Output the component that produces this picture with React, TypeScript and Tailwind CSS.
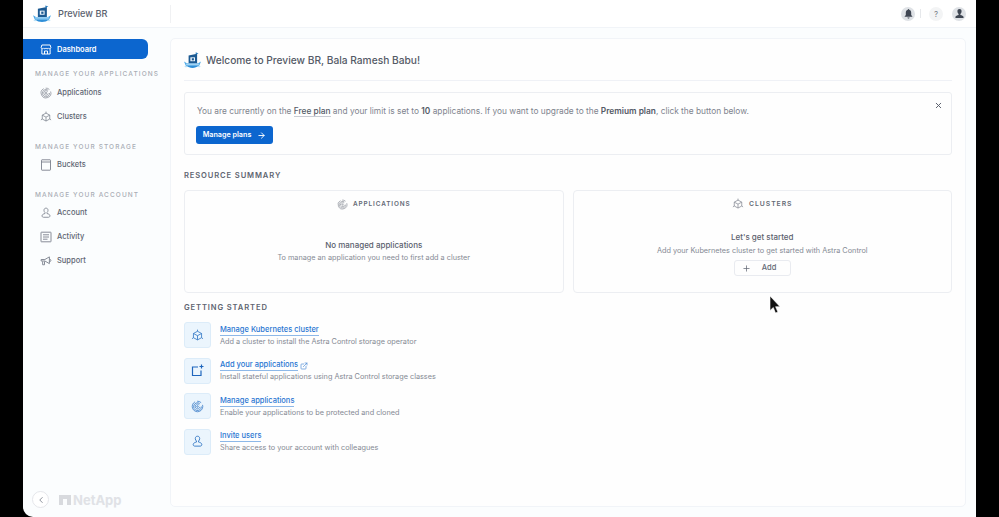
import { ArrowRight, ChevronLeft, ExternalLink, Plus, X } from "lucide-react";
import type { ReactNode } from "react";

const ShipLogo = ({ size }: { size: number }) => (
  <svg width={size} height={size} viewBox="0 0 24 24">
    <path d="M0 13.500l4 2.500h16l4-2.500-2.500 6H2.500z" fill="#4ba8e6" />
    <path d="M3 19.500c2.500 1.800 5.500 3 9 3s6.500-1.200 9-3z" fill="#2f8fd8" />
    <path d="M1 20.500c1.500.5 2.500.5 4-.3M19 20.200c1.500.8 2.500.8 4 .3" stroke="#8fcdf2" strokeWidth="1" fill="none" />
    <path d="M6.500 5l12-2.500V16h-12z" fill="#1c5a92" />
    <path d="M9 7.500h6.500V13H9z" fill="#eaf3fb" />
    <path d="M11 8.800h3v3h-3z" fill="#1c5a92" />
    <path d="M16.500.5L20.500 2l-4 1.500z" fill="#2a7fc0" />
    <path d="M3 16.500h18v1.500H3z" fill="#bfe3f8" />
  </svg>
);

const StoreIcon = () => (
  <svg width="13" height="13" viewBox="0 0 16 16" fill="none" stroke="currentColor" strokeWidth="1.300">
    <path d="M2.500 2h11l1 3.500a1.700 1.700 0 0 1-3.300.4 1.700 1.700 0 0 1-3.200 0 1.700 1.700 0 0 1-3.200 0 1.700 1.700 0 0 1-3.300-.4z" />
    <path d="M2.500 7.500V14h11V7.500M6 14v-4h4v4" />
  </svg>
);

const AppsIcon = ({ size = 12 }: { size?: number }) => (
  <svg width={size} height={size} viewBox="0 0 16 16" fill="none" stroke="currentColor" strokeWidth="0.900">
    <path d="M5 2.200A6.500 6.500 0 1 0 14.200 6" />
    <path d="M7.500 1.500a6.500 6.500 0 0 1 5 1.800" />
    <path d="M10.800 4.300A4.800 4.800 0 1 0 12.800 8" />
    <path d="M10.300 6a3 3 0 1 0 .7 2.500" />
    <circle cx="8" cy="8" r="1" />
  </svg>
);

const CubeIcon = ({ size = 12 }: { size?: number }) => (
  <svg width={size} height={size} viewBox="0 0 16 16" fill="none" stroke="currentColor" strokeWidth="1">
    <path d="M8 2.800l5 2.700v5.200l-5 2.700-5-2.700V5.500zM3 5.500L8 8.200l5-2.700M8 8.200v5.200" />
    <path d="M8 .8v2M1.200 12l1.800-1.300M14.800 12L13 10.700" />
  </svg>
);

const BucketIcon = () => (
  <svg width="12" height="12" viewBox="0 0 12 12" fill="none" stroke="currentColor" strokeWidth="0.900">
    <rect x="1.500" y=".8" width="9" height="10.400" rx=".5" />
    <path d="M1.500 3h9" />
  </svg>
);

const PersonIcon = ({ size = 12 }: { size?: number }) => (
  <svg width={size} height={size} viewBox="0 0 16 16" fill="none" stroke="currentColor" strokeWidth="1.100">
    <path d="M8 1.500c-1.700 0-2.700 1.200-2.700 2.900 0 1.300.6 2.400 1.400 3v1.300c-2 .5-4 1.300-4 3 0 1.200.8 2 2 2h6.600c1.200 0 2-.8 2-2 0-1.700-2-2.500-4-3V7.400c.8-.6 1.400-1.700 1.400-3C10.700 2.700 9.700 1.500 8 1.500z" />
  </svg>
);

const ActivityIcon = () => (
  <svg width="12" height="12" viewBox="0 0 12 12" fill="none" stroke="currentColor" strokeWidth="0.900">
    <rect x="1" y="1.200" width="10" height="9.600" rx=".4" />
    <path d="M3 3.800h6M3 6h6M3 8.200h4.500" />
  </svg>
);

const MegaphoneIcon = () => (
  <svg width="12" height="12" viewBox="0 0 16 16" fill="none" stroke="currentColor" strokeWidth="1.200">
    <path d="M1.500 6h5l6-3.500v9l-6-3.500h-5zM3.500 8.500V13h2.500V8.500M12.500 5.500c1.300 0 2 .9 2 1.800s-.7 1.700-2 1.700" />
  </svg>
);

const BellIcon = () => (
  <svg width="9" height="10" viewBox="0 0 10 11" fill="#3f4652">
    <path d="M5 0c.5 0 .8.300.8.800C7.300 1.200 8 2.500 8 4v2.500L9.500 8.500h-9L2 6.500V4c0-1.500.7-2.800 2.200-3.200C4.200.3 4.500 0 5 0zM3.800 9.300h2.400C6.100 10 5.600 10.500 5 10.500S3.900 10 3.800 9.300z" />
  </svg>
);

const UserSolidIcon = () => (
  <svg width="9" height="10" viewBox="0 0 10 11" fill="#3f4652">
    <path d="M5 0c1.500 0 2.300 1 2.300 2.500S6.500 5 6 5.500v1c1.500.4 3.500.9 3.500 2.300V10H.5V8.800C.5 7.400 2.500 6.900 4 6.500v-1C3.500 5 2.700 4 2.700 2.500S3.500 0 5 0z" />
  </svg>
);

const NavItem = ({ icon, label }: { icon: ReactNode; label: string }) => (
  <div className="flex h-6 items-center gap-[5px] pl-[17px] text-[#7a808c]">
    <span className="flex w-[12px] justify-center">{icon}</span>
    <span className="text-[7.500px] font-medium text-[#606673]">{label}</span>
  </div>
);

const NavHeading = ({ label, className }: { label: string; className: string }) => (
  <div className={`pl-[12px] text-[6.500px] leading-[10px] font-medium tracking-[0.17em] text-[#a9adb5] uppercase ${className}`}>
    {label}
  </div>
);

const StartRow = ({ icon, title, text, external }: { icon: ReactNode; title: string; text: string; external?: boolean }) => (
  <div className="flex h-[26px] items-center gap-[9px]">
    <div className="flex h-[26px] w-[27px] items-center justify-center rounded-[3px] border border-[#dcecf9] bg-[#ebf5fd] text-[#2f75c4]">
      {icon}
    </div>
    <div className="pt-[1px]">
      <div className="flex items-center gap-[1px]">
        <span className="border-b border-[#8db8e8] text-[7.500px] leading-[10px] font-medium text-[#2a76d2]">{title}</span>
        {external && <ExternalLink size={8} className="ml-[1px] text-[#4a8ad4]" />}
      </div>
      <div className="mt-[1px] text-[7.300px] leading-[10px] text-[#858a94]">{text}</div>
    </div>
  </div>
);

const App = () => {
  return (
    <div className="relative flex h-[517px] w-[999px] overflow-hidden bg-black pl-[23px] font-['Inter',sans-serif]">
      <div className="flex h-full w-[953px] flex-col overflow-hidden rounded-bl-[10px] bg-[#fbfdfe]">
        <header className="flex h-[28px] shrink-0 items-center border-b border-[#f1f4f8] bg-white">
          <div className="flex w-[147px] items-center gap-[7px] pl-[10px]">
            <ShipLogo size={18} />
            <span className="text-[9.200px] font-medium text-[#5b616e]">Preview BR</span>
          </div>
          <div className="h-[18px] w-px bg-[#f0f1f3]" />
          <div className="ml-auto flex items-center pr-[10px]">
            <div className="flex h-[14px] w-[14px] items-center justify-center rounded-full bg-[#dfe2e6]">
              <BellIcon />
            </div>
            <div className="mr-[8px] ml-[5px] h-[9px] w-px bg-[#e6e8eb]" />
            <div className="flex h-[14px] w-[14px] items-center justify-center rounded-full bg-[#f3f4f5] text-[8px] text-[#7b808a]">
              ?
            </div>
            <div className="ml-[9px] flex h-[14px] w-[14px] items-center justify-center rounded-full bg-[#dfe2e6]">
              <UserSolidIcon />
            </div>
          </div>
        </header>

        <div className="flex min-h-0 flex-1">
          <aside className="flex w-[147px] shrink-0 flex-col">
            <div className="mt-[11px] flex h-[20px] w-[125px] items-center gap-[5px] rounded-r-[6px] bg-[#0c66cf] pt-[1px] pl-[17px] text-white">
              <span className="flex w-[12px] justify-center">
                <StoreIcon />
              </span>
              <span className="text-[7.500px] font-semibold">Dashboard</span>
            </div>
            <NavHeading label="Manage your applications" className="mt-[10px]" />
            <div className="mt-[2px]">
              <NavItem icon={<AppsIcon />} label="Applications" />
              <NavItem icon={<CubeIcon />} label="Clusters" />
            </div>
            <NavHeading label="Manage your storage" className="mt-[13px]" />
            <div className="mt-[1px]">
              <NavItem icon={<BucketIcon />} label="Buckets" />
            </div>
            <NavHeading label="Manage your account" className="mt-[13px]" />
            <div className="mt-[1px]">
              <NavItem icon={<PersonIcon />} label="Account" />
              <NavItem icon={<ActivityIcon />} label="Activity" />
              <NavItem icon={<MegaphoneIcon />} label="Support" />
            </div>
            <div className="mt-auto mb-[9px] flex items-center gap-[10px] pl-[9px]">
              <div className="flex h-[17px] w-[17px] items-center justify-center rounded-full border border-[#e4e6ea] bg-white text-[#777d88]">
                <ChevronLeft size={10} />
              </div>
              <div className="flex items-center gap-[1px]">
                <svg width="12" height="10" viewBox="0 0 12 10" fill="#d8dade">
                  <path d="M0 0h12v10H8V4H4v6H0z" />
                </svg>
                <span className="ml-[1px] text-[13px] leading-4 font-bold text-[#e0e2e6]">NetApp</span>
              </div>
            </div>
          </aside>

          <main className="my-[10px] flex w-[796px] flex-col rounded-[5px] border border-[#f1f4f8] bg-[#fefefe] px-[13px]">
            <div className="flex h-[42px] shrink-0 items-center gap-[5px] border-b border-[#eff1f6] pt-[2px]">
              <ShipLogo size={17} />
              <h1 className="text-[10.200px] font-medium text-[#545a66]">Welcome to Preview BR, Bala Ramesh Babu!</h1>
            </div>

            <section className="relative mt-[11px] h-[63px] shrink-0 rounded-[3px] border border-[#eceef2] px-[12px] pt-[12px]">
              <p className="text-[8.330px] leading-[12px] text-[#7f848e]">
                You are currently on the <span className="border-b border-[#c9ccd3] font-medium text-[#545a66]">Free plan</span> and your limit is set to{" "}
                <span className="font-semibold text-[#545a66]">10</span> applications. If you want to upgrade to the{" "}
                <span className="font-semibold text-[#545a66]">Premium plan</span>, click the button below.
              </p>
              <button className="mt-[9px] -ml-px flex h-[18px] w-[77px] items-center justify-center gap-[6px] rounded-[3px] bg-[#0c66cf] text-[7.200px] font-semibold text-white">
                Manage plans
                <ArrowRight size={9} strokeWidth={2.500} />
              </button>
              <X size={9} strokeWidth={2.500} className="absolute top-[8px] right-[8px] text-[#555b67]" />
            </section>

            <h2 className="mt-[15px] text-[7.600px] leading-[12px] font-semibold tracking-[0.115em] text-[#5f6571] uppercase">Resource summary</h2>

            <div className="mt-[8px] grid h-[103px] shrink-0 grid-cols-2 gap-[9px]">
              <div className="flex flex-col items-center rounded-[4px] border border-[#eceef2]">
                <div className="mt-[5px] flex h-[16px] items-center gap-[5px] text-[#858a94]">
                  <AppsIcon size={11} />
                  <span className="mt-[1px] text-[6.400px] font-semibold tracking-[0.14em] text-[#646a76]">APPLICATIONS</span>
                </div>
                <div className="mt-[27px] text-[8px] leading-[12px] font-medium text-[#5b616e]">No managed applications</div>
                <div className="mt-[1px] text-[7.270px] leading-[11px] text-[#858a94]">To manage an application you need to first add a cluster</div>
              </div>
              <div className="flex flex-col items-center rounded-[4px] border border-[#eceef2]">
                <div className="mt-[5px] flex h-[16px] items-center gap-[5px] text-[#858a94]">
                  <CubeIcon size={12} />
                  <span className="text-[6.800px] font-semibold tracking-[0.14em] text-[#646a76]">CLUSTERS</span>
                </div>
                <div className="mt-[19px] text-[8px] leading-[12px] font-medium text-[#5b616e]">Let's get started</div>
                <div className="mt-[2px] text-[7.300px] leading-[11px] text-[#858a94]">Add your Kubernetes cluster to get started with Astra Control</div>
                <button className="mt-[4px] flex h-[16px] w-[57px] items-center justify-start gap-[11px] rounded-[3px] border border-[#e9ebf0] pl-[7px] text-[7.500px] font-medium text-[#646a76]">
                  <Plus size={9} strokeWidth={2} />
                  Add
                </button>
              </div>
            </div>

            <h2 className="mt-[9px] text-[7.600px] leading-[12px] font-semibold tracking-[0.115em] text-[#5f6571] uppercase">Getting started</h2>

            <div className="mt-[8px] flex flex-col gap-[9.500px]">
              <StartRow icon={<CubeIcon size={13} />} title="Manage Kubernetes cluster" text="Add a cluster to install the Astra Control storage operator" />
              <StartRow
                icon={
                  <svg width="13" height="13" viewBox="0 0 13 13" fill="none" stroke="#1f66bd" strokeWidth="1.200">
                    <path d="M7 3H1.500v8.500H10V6.500M10.500 .5v4M8.500 2.500h4" />
                  </svg>
                }
                title="Add your applications"
                text="Install stateful applications using Astra Control storage classes"
                external
              />
              <StartRow icon={<AppsIcon size={13} />} title="Manage applications" text="Enable your applications to be protected and cloned" />
              <StartRow icon={<PersonIcon size={13} />} title="Invite users" text="Share access to your account with colleagues" />
            </div>
          </main>
        </div>
      </div>

      {/* mouse pointer caught in the capture */}
      <svg className="absolute top-[296px] left-[769px]" width="12" height="20" viewBox="0 0 12 20">
        <path d="M1 0v14.500l3.300-3 2.200 5.500 2.400-1-2.300-5.300H11z" fill="#111" stroke="#fff" strokeWidth=".6" />
      </svg>
    </div>
  );
};

export default App;
